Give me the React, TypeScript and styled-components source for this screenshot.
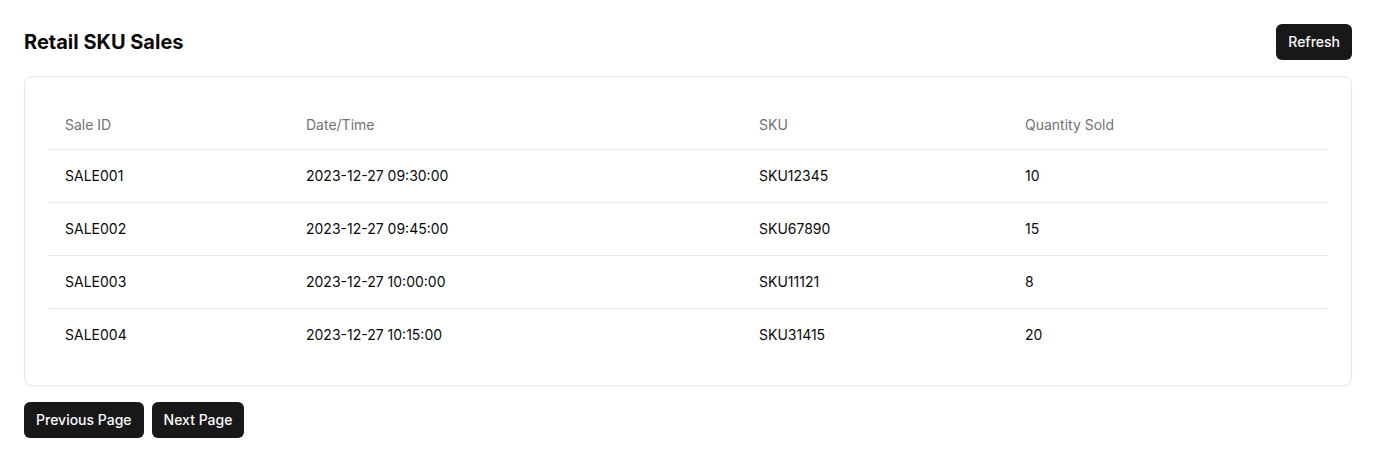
import React from "react";
import styled, { createGlobalStyle } from "styled-components";

const GlobalStyle = createGlobalStyle`
  * { box-sizing: border-box; }
  body {
    margin: 0;
    background: #ffffff;
    font-family: Inter, "Noto Sans", sans-serif;
    color: #0a0a0a;
    -webkit-font-smoothing: antialiased;
  }
`;

const Page = styled.div`
  padding: 24px;
  display: flex;
  flex-direction: column;
`;

const Header = styled.div`
  display: flex;
  align-items: center;
  justify-content: space-between;
  margin-bottom: 16px;
`;

const Title = styled.h1`
  margin: 0;
  font-size: 20px;
  line-height: 28px;
  font-weight: 700;
  color: #0a0a0a;
`;

const Button = styled.button`
  height: 36px;
  padding: 0 12px;
  border: none;
  border-radius: 6px;
  background: #18181b;
  color: #fafafa;
  font-family: Inter, "Noto Sans", sans-serif;
  font-size: 14px;
  font-weight: 500;
  line-height: 20px;
  cursor: pointer;
`;

const Card = styled.div`
  border: 1px solid #e5e7eb;
  border-radius: 8px;
  padding: 24px;
  box-shadow: 0 1px 2px rgba(0, 0, 0, 0.03);
`;

const Table = styled.table`
  width: 100%;
  border-collapse: collapse;
  table-layout: fixed;
  font-size: 14px;
  line-height: 20px;
`;

const HeadCell = styled.th<{ $w: number }>`
  width: ${(p) => p.$w}px;
  height: 48px;
  padding: 0 16px;
  text-align: left;
  font-weight: 400;
  color: #737373;
  vertical-align: middle;
`;

const Row = styled.tr<{ $head?: boolean }>`
  border-bottom: 1px solid #e5e7eb;
  &:last-child {
    border-bottom: ${(p) => (p.$head ? "1px solid #e5e7eb" : "none")};
  }
`;

const Cell = styled.td`
  padding: 16px;
  color: #0a0a0a;
  vertical-align: middle;
`;

const Pager = styled.div`
  display: flex;
  gap: 8px;
  margin-top: 16px;
`;

const columns = [
  { label: "Sale ID", w: 241 },
  { label: "Date/Time", w: 453 },
  { label: "SKU", w: 266 },
  { label: "Quantity Sold", w: 318 },
];

const rows = [
  ["SALE001", "2023-12-27 09:30:00", "SKU12345", "10"],
  ["SALE002", "2023-12-27 09:45:00", "SKU67890", "15"],
  ["SALE003", "2023-12-27 10:00:00", "SKU11121", "8"],
  ["SALE004", "2023-12-27 10:15:00", "SKU31415", "20"],
];

export default function App() {
  return (
    <>
      <GlobalStyle />
      <Page>
        <Header>
          <Title>Retail SKU Sales</Title>
          <Button>Refresh</Button>
        </Header>
        <Card>
          <Table>
            <thead>
              <Row $head>
                {columns.map((c) => (
                  <HeadCell key={c.label} $w={c.w}>
                    {c.label}
                  </HeadCell>
                ))}
              </Row>
            </thead>
            <tbody>
              {rows.map((r) => (
                <Row key={r[0]}>
                  {r.map((v, i) => (
                    <Cell key={i}>{v}</Cell>
                  ))}
                </Row>
              ))}
            </tbody>
          </Table>
        </Card>
        <Pager>
          <Button>Previous Page</Button>
          <Button>Next Page</Button>
        </Pager>
      </Page>
    </>
  );
}
